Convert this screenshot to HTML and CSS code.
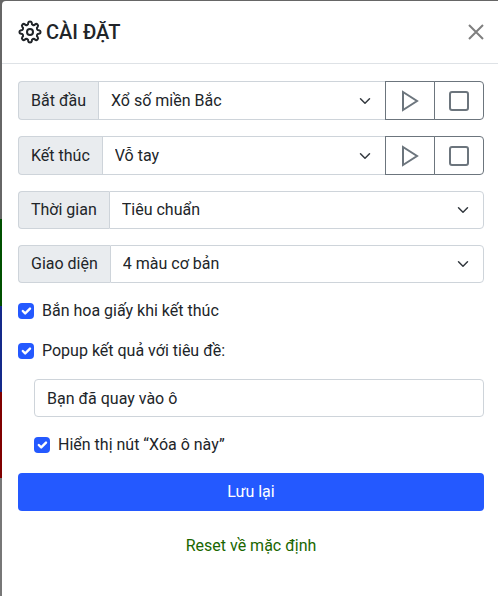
FILE: index.html
```html
<!DOCTYPE html>
<html lang="vi">
<head>
  <meta charset="UTF-8">
  <meta name="viewport" content="width=device-width, initial-scale=1">
  <title>Cài đặt</title>
  <link rel="stylesheet" href="styles.css">
</head>
<body>
  <div class="modal">
    <div class="modal-header">
      <h5 class="modal-title">
        <svg class="gear" viewBox="0 0 24 24" width="24" height="24">
          <path d="M10.170 2.980A1.850 1.850 0 0 1 13.830 2.980A1.800 1.800 0 0 0 17.080 4.330A1.850 1.850 0 0 1 19.670 6.920A1.800 1.800 0 0 0 21.020 10.170A1.850 1.850 0 0 1 21.020 13.830A1.800 1.800 0 0 0 19.670 17.080A1.850 1.850 0 0 1 17.080 19.670A1.800 1.800 0 0 0 13.830 21.020A1.850 1.850 0 0 1 10.170 21.020A1.800 1.800 0 0 0 6.920 19.670A1.850 1.850 0 0 1 4.330 17.080A1.800 1.800 0 0 0 2.980 13.830A1.850 1.850 0 0 1 2.980 10.170A1.800 1.800 0 0 0 4.330 6.920A1.850 1.850 0 0 1 6.920 4.330A1.800 1.800 0 0 0 10.170 2.980Z"/>
          <circle cx="12" cy="12" r="3"/>
        </svg>
        CÀI ĐẶT
      </h5>
      <button type="button" class="btn-close" aria-label="Đóng">
        <svg viewBox="0 0 16 16" width="16" height="16"><path d="M1 1l14 14M15 1L1 15"/></svg>
      </button>
    </div>

    <form class="modal-body">
      <!-- âm thanh -->
      <div class="input-group has-buttons">
        <label class="input-group-text" for="soundStart">Bắt đầu</label>
        <select class="form-select" id="soundStart"><option>Xổ số miền Bắc</option></select>
        <button type="button" class="btn-outline" aria-label="Phát">
          <svg viewBox="0 0 24 24" width="24" height="24"><path d="M5 3v18l14-9z"/></svg>
        </button>
        <button type="button" class="btn-outline" aria-label="Dừng">
          <svg viewBox="0 0 24 24" width="24" height="24"><rect x="3" y="3" width="18" height="18" rx="2"/></svg>
        </button>
      </div>
      <div class="input-group has-buttons">
        <label class="input-group-text" for="soundEnd">Kết thúc</label>
        <select class="form-select" id="soundEnd"><option>Vỗ tay</option></select>
        <button type="button" class="btn-outline" aria-label="Phát">
          <svg viewBox="0 0 24 24" width="24" height="24"><path d="M5 3v18l14-9z"/></svg>
        </button>
        <button type="button" class="btn-outline" aria-label="Dừng">
          <svg viewBox="0 0 24 24" width="24" height="24"><rect x="3" y="3" width="18" height="18" rx="2"/></svg>
        </button>
      </div>

      <div class="input-group">
        <label class="input-group-text" for="duration">Thời gian</label>
        <select class="form-select" id="duration"><option>Tiêu chuẩn</option></select>
      </div>
      <div class="input-group">
        <label class="input-group-text" for="theme">Giao diện</label>
        <select class="form-select" id="theme"><option>4 màu cơ bản</option></select>
      </div>

      <!-- kết quả -->
      <div class="form-check">
        <input type="checkbox" id="confetti" checked>
        <label for="confetti">Bắn hoa giấy khi kết thúc</label>
      </div>
      <div class="form-check">
        <input type="checkbox" id="popup" checked>
        <label for="popup">Popup kết quả với tiêu đề:</label>
      </div>
      <div class="sub-options">
        <input type="text" class="form-control" id="popupTitle" aria-label="Tiêu đề" value="Bạn đã quay vào ô">
        <div class="form-check">
          <input type="checkbox" id="showRemove" checked>
          <label for="showRemove">Hiển thị nút “Xóa ô này”</label>
        </div>
      </div>

      <button type="button" class="btn-primary">Lưu lại</button>
      <button type="button" class="btn-link">Reset về mặc định</button>
    </form>
  </div>
</body>
</html>
```
FILE: styles.css
```css
* {
  box-sizing: border-box;
}
body {
  margin: 0;
  padding: 1px 0 0 2px;
  background: linear-gradient(#666 219px, #005000 219px 306px, #14298a 306px 392px, #800000 392px 478px, #777 478px);
}
body, input, select, button {
  font-family: Roboto, sans-serif;
  font-size: 16px;
  line-height: 24px;
  color: #212529;
}

/* modal */
.modal {
  min-height: calc(100vh - 1px);
  background: #fff;
  border-radius: 4px 0 0 0;
}
.modal-header {
  display: flex;
  align-items: center;
  justify-content: space-between;
  height: 63px;
  padding: 0 14px 0 16px;
  border-bottom: 1px solid #dee2e6;
}
.modal-title {
  display: flex;
  align-items: center;
  gap: 4px;
  margin: 0;
  font-size: 20px;
  line-height: 30px;
  font-weight: 500;
}
.modal-body {
  display: flex;
  flex-direction: column;
  gap: 16px;
  padding: 17px 14px 16px 16px;
}
svg {
  display: block;
  fill: none;
  stroke: currentColor;
  stroke-width: 2;
}
.btn-close {
  padding: 0;
  border: none;
  background: none;
  color: #7f7f7f;
}

/* select groups */
.input-group {
  display: flex;
  height: 38px;
}
.has-buttons {
  height: 39px;
}
.input-group-text {
  display: flex;
  align-items: center;
  padding: 0 12px;
  background: #e9ecef;
  border: 1px solid #ced4da;
  border-right: none;
  border-radius: 4px 0 0 4px;
}
.form-select {
  appearance: none;
  flex: 1;
  min-width: 0;
  padding: 0 36px 0 12px;
  border: 1px solid #ced4da;
  border-radius: 0 4px 4px 0;
  background: #fff url("data:image/svg+xml,%3csvg xmlns='http://www.w3.org/2000/svg' viewBox='0 0 16 16'%3e%3cpath fill='none' stroke='%23343a40' stroke-linecap='round' stroke-linejoin='round' stroke-width='2' d='M2 5l6 6 6-6'/%3e%3c/svg%3e") no-repeat right 14px center / 12px 12px;
}
.has-buttons .form-select {
  border-right: none;
  border-radius: 0;
}
.btn-outline {
  padding: 0 12px;
  border: 1px solid #6c757d;
  background: #fff;
  color: #6c757d;
}
.btn-outline:last-child {
  margin-left: -1px;
  border-radius: 0 4px 4px 0;
}

/* checkboxes */
.form-check {
  display: flex;
  align-items: center;
  gap: 8px;
}
.form-check input {
  appearance: none;
  width: 16px;
  height: 16px;
  margin: 0;
  border-radius: 4px;
  background: #2459ff url("data:image/svg+xml,%3csvg xmlns='http://www.w3.org/2000/svg' viewBox='0 0 20 20'%3e%3cpath fill='none' stroke='%23fff' stroke-linecap='round' stroke-linejoin='round' stroke-width='3' d='M6 10l3 3 6-6'/%3e%3c/svg%3e") center / 16px 16px;
}
.sub-options {
  display: flex;
  flex-direction: column;
  gap: 16px;
  padding-left: 16px;
}
.form-control {
  width: 100%;
  height: 38px;
  padding: 0 12px;
  border: 1px solid #ced4da;
  border-radius: 4px;
}

/* buttons */
.btn-primary {
  height: 38px;
  border: none;
  border-radius: 4px;
  background: #2459ff;
  color: #fff;
}
.btn-link {
  height: 38px;
  border: none;
  background: none;
  color: #1a6600;
}
```
